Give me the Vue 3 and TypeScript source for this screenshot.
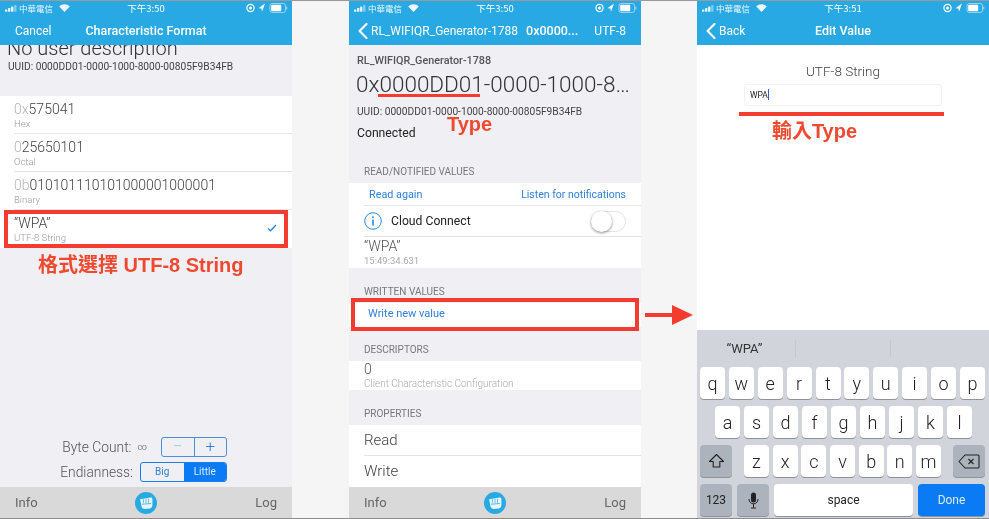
<script setup lang="ts">
const formats = [
  { prefix: '0x', value: '575041', label: 'Hex' },
  { prefix: '0', value: '25650101', label: 'Octal' },
  { prefix: '0b', value: '010101110101000001000001', label: 'Binary' },
  { prefix: '', value: '“WPA”', label: 'UTF-8 String', checked: true },
];

const keyRows = ['qwertyuiop', 'asdfghjkl', 'zxcvbnm'].map((r) => r.split(''));
</script>

<template>
  <svg class="defs" width="0" height="0">
    <symbol id="signal" viewBox="0 0 17 10">
      <rect x="0" y="7" width="3" height="3" rx=".6" />
      <rect x="4" y="5" width="3" height="5" rx=".6" />
      <rect x="8" y="3" width="3" height="7" rx=".6" />
      <rect x="12" y="1" width="3" height="9" rx=".6" opacity=".45" />
    </symbol>
    <symbol id="wifi" viewBox="0 0 14 10">
      <path d="M7 10 .3 3.2C4-.6 10-.6 13.7 3.2Z" />
    </symbol>
    <symbol id="status-right" viewBox="0 0 42 12">
      <circle cx="4.500" cy="6" r="3.600" fill="none" stroke="#fff" stroke-width="1.200" />
      <circle cx="4.500" cy="6" r="1.500" fill="#fff" />
      <path d="M19 1.500 12.500 6.200l3 .4.5 3.200Z" fill="#fff" />
      <rect x="24" y="1.500" width="15.500" height="9" rx="2.200" fill="none" stroke="#fff" stroke-opacity=".5" />
      <rect x="25.200" y="2.700" width="10" height="6.600" rx="1" fill="#fff" />
      <rect x="40.200" y="4.500" width="1.200" height="3" rx=".6" fill="#fff" opacity=".5" />
    </symbol>
    <symbol id="back" viewBox="0 0 10 16">
      <path d="M8.500 1 1.600 8l6.900 7" fill="none" stroke="#fff" stroke-width="2.100" stroke-linecap="round" stroke-linejoin="round" />
    </symbol>
    <symbol id="fist" viewBox="0 0 22 22">
      <circle cx="11" cy="11" r="11" fill="#29a9e3" />
      <path d="M5 7.200 15.500 5.600c1.200-.2 1.900.4 1.900 1.500v6c0 1.800-1 3-2.500 3.300l-5.200.6c-1.400 0-2.500-.7-3-2Z" fill="#e6f5fc" />
      <path d="M8.500 7.200v3.600M11 6.800v4M13.500 6.500v4.300" stroke="#29a9e3" stroke-width=".7" fill="none" />
      <path d="M7 12.200l9-.7" stroke="#29a9e3" stroke-width=".8" fill="none" />
    </symbol>
  </svg>

  <main class="page">
    <!-- format picker -->
    <section class="phone">
      <header class="top">
        <div class="status">
          <div class="status-left">
            <svg class="sig"><use href="#signal" /></svg><span>中華電信</span><svg class="wifi"><use href="#wifi" /></svg>
          </div>
          <span class="status-time">下午3:50</span>
          <svg class="status-right"><use href="#status-right" /></svg>
        </div>
        <div class="nav">
          <span class="nav-cancel">Cancel</span>
          <span class="nav-title">Characteristic Format</span>
        </div>
      </header>

      <div class="body">
        <div class="clipped-title">No user description</div>
        <div class="uuid uuid-left">UUID: 0000DD01-0000-1000-8000-00805F9B34FB</div>
        <ul class="formats">
          <li v-for="f in formats" :key="f.label" class="format">
            <div class="format-inner">
              <div class="format-value"><span class="dim">{{ f.prefix }}</span>{{ f.value }}</div>
              <div class="format-label">{{ f.label }}</div>
              <svg v-if="f.checked" class="check" viewBox="0 0 12 10">
                <path d="M1 5.500 4.200 8.500 11 1.200" fill="none" stroke="#2f7fdc" stroke-width="1.600" />
              </svg>
            </div>
          </li>
        </ul>
        <div class="note note-left">格式選擇 UTF-8 String</div>

        <div class="controls">
          <div class="control-row">
            <span class="control-label">Byte Count:</span>
            <span class="infinity">∞</span>
            <div class="stepper">
              <span class="step step-off">−</span>
              <span class="step">+</span>
            </div>
          </div>
          <div class="control-row">
            <span class="control-label">Endianness:</span>
            <div class="segment">
              <span class="seg">Big</span>
              <span class="seg seg-on">Little</span>
            </div>
          </div>
        </div>
      </div>

      <footer class="tabs">
        <span>Info</span>
        <svg class="fist"><use href="#fist" /></svg>
        <span>Log</span>
      </footer>

      <div class="frame frame-left"></div>
    </section>

    <div class="gap"></div>

    <!-- characteristic detail -->
    <section class="phone">
      <header class="top">
        <div class="status">
          <div class="status-left">
            <svg class="sig"><use href="#signal" /></svg><span>中華電信</span><svg class="wifi"><use href="#wifi" /></svg>
          </div>
          <span class="status-time">下午3:50</span>
          <svg class="status-right"><use href="#status-right" /></svg>
        </div>
        <div class="nav">
          <svg class="back"><use href="#back" /></svg>
          <span class="nav-back-text">RL_WIFIQR_Generator-1788</span>
          <span class="nav-mid">0x0000...</span>
          <span class="nav-utf">UTF-8</span>
        </div>
      </header>

      <div class="body">
        <div class="peripheral">RL_WIFIQR_Generator-1788</div>
        <div class="big-uuid">0x0000DD01-0000-1000-8…</div>
        <div class="uuid uuid-mid">UUID: 0000DD01-0000-1000-8000-00805F9B34FB</div>
        <div class="connected">Connected</div>

        <div class="section-head head-read">READ/NOTIFIED VALUES</div>
        <div class="group">
          <div class="actions">
            <span>Read again</span>
            <span>Listen for notifications</span>
          </div>
          <div class="cloud">
            <svg class="info" viewBox="0 0 18 18">
              <circle cx="9" cy="9" r="8.300" fill="none" stroke="#2f88e6" />
              <circle cx="9" cy="5.200" r="1" fill="#2f88e6" />
              <rect x="8.200" y="7.500" width="1.600" height="6" fill="#2f88e6" />
            </svg>
            <span class="cloud-label">Cloud Connect</span>
            <span class="toggle"><i></i></span>
          </div>
          <div class="read-value">
            <div class="read-text">“WPA”</div>
            <div class="read-time">15:49:34.631</div>
          </div>
        </div>

        <div class="section-head head-written">WRITTEN VALUES</div>
        <div class="group write-row">Write new value</div>

        <div class="section-head head-desc">DESCRIPTORS</div>
        <div class="group desc">
          <div class="desc-value">0</div>
          <div class="desc-label">Client Characteristic Configuration</div>
        </div>

        <div class="section-head head-props">PROPERTIES</div>
        <div class="group">
          <div class="prop prop-first">Read</div>
          <div class="prop">Write</div>
        </div>
      </div>

      <footer class="tabs">
        <span>Info</span>
        <svg class="fist"><use href="#fist" /></svg>
        <span>Log</span>
      </footer>

      <div class="underline"></div>
      <div class="note note-type">Type</div>
      <div class="frame frame-mid"></div>
    </section>

    <div class="gap gap-arrow">
      <svg class="arrow" viewBox="0 0 48 20">
        <rect x="0" y="8" width="28" height="4" fill="#f33c2f" />
        <path d="M27 0 48 10 27 20Z" fill="#f33c2f" />
      </svg>
    </div>

    <!-- edit value -->
    <section class="phone phone-edit">
      <header class="top">
        <div class="status">
          <div class="status-left">
            <svg class="sig"><use href="#signal" /></svg><span>中華電信</span><svg class="wifi"><use href="#wifi" /></svg>
          </div>
          <span class="status-time">下午3:51</span>
          <svg class="status-right"><use href="#status-right" /></svg>
        </div>
        <div class="nav">
          <svg class="back"><use href="#back" /></svg>
          <span class="nav-back-text">Back</span>
          <span class="nav-title">Edit Value</span>
        </div>
      </header>

      <div class="edit-body">
        <div class="edit-title">UTF-8 String</div>
        <div class="edit-input">WPA<i class="caret"></i></div>
        <div class="edit-line"></div>
        <div class="note note-input">輸入Type</div>
      </div>

      <div class="keyboard">
        <div class="suggest">
          <span>“WPA”</span>
          <span></span>
          <span></span>
        </div>
        <div class="key-row">
          <span v-for="k in keyRows[0]" :key="k" class="key">{{ k }}</span>
        </div>
        <div class="key-row key-row-mid">
          <span v-for="k in keyRows[1]" :key="k" class="key">{{ k }}</span>
        </div>
        <div class="key-row key-row-3">
          <span class="key key-fn">
            <svg width="17" height="16" viewBox="0 0 17 16">
              <path d="M8.500 1.500 15.500 8.500H11.800V14H5.200V8.500H1.500Z" fill="none" stroke="#222" stroke-width="1.100" stroke-linejoin="round" />
            </svg>
          </span>
          <div class="letters">
            <span v-for="k in keyRows[2]" :key="k" class="key">{{ k }}</span>
          </div>
          <span class="key key-fn">
            <svg width="22" height="15" viewBox="0 0 22 15">
              <path d="M7 1H20a1 1 0 0 1 1 1V13a1 1 0 0 1-1 1H7L1 7.500Z" fill="none" stroke="#222" stroke-width="1.100" stroke-linejoin="round" />
              <path d="M10.500 5l5 5M15.500 5l-5 5" stroke="#222" stroke-width="1.100" />
            </svg>
          </span>
        </div>
        <div class="key-row key-row-4">
          <span class="key key-fn key-small">123</span>
          <span class="key key-fn">
            <svg width="11" height="17" viewBox="0 0 11 17">
              <rect x="3" y="0.500" width="5" height="10" rx="2.500" fill="#222" />
              <path d="M1 7c0 3 2 4.800 4.500 4.800S10 10 10 7M5.500 12v3.500M3 16h5" fill="none" stroke="#222" stroke-width="1" />
            </svg>
          </span>
          <span class="key key-space">space</span>
          <span class="key key-done">Done</span>
        </div>
      </div>
    </section>
  </main>
</template>

<style>
html,
body {
  margin: 0;
  background: #f5f5f5;
}
</style>

<style scoped>
.defs {
  position: absolute;
}

.page {
  display: flex;
  width: 989px;
  height: 519px;
  overflow: hidden;
  background: #f5f5f5;
  border-bottom: 1px solid #8d8d8d;
  border-top: 1px solid #9a9a9a;
  box-sizing: border-box;
  font-family: Roboto, "Noto Sans", "Noto Sans CJK TC", sans-serif;
  color: #222;
  /* the reference is a soft, upscaled screenshot */
  filter: blur(0.35px);
}

.gap {
  width: 57px;
  flex: none;
}

.gap-arrow {
  width: 56px;
  display: flex;
  align-items: center;
  justify-content: center;
  padding-top: 110px;
  box-sizing: border-box;
}

.arrow {
  width: 48px;
  height: 20px;
}

.phone {
  position: relative;
  width: 292px;
  flex: none;
  display: flex;
  flex-direction: column;
  background: #efeff4;
  margin-top: -1px;
  height: 518px;
}

.top {
  background: #29a9e3;
  color: #fff;
  flex: none;
  position: relative;
  z-index: 2;
}

.status {
  position: relative;
  height: 16px;
  display: flex;
  justify-content: space-between;
  align-items: center;
  padding: 0 4px 0 5px;
}

.status-left {
  display: flex;
  align-items: center;
  gap: 1px;
  opacity: 0.92;
  font-family: "Noto Sans CJK TC", sans-serif;
  font-size: 8.500px;
}

.sig {
  width: 13px;
  height: 8px;
  fill: #fff;
}

.wifi {
  width: 11px;
  height: 8px;
  fill: #fff;
  margin-left: 5px;
}

.status-time {
  position: absolute;
  left: 0;
  right: 0;
  text-align: center;
  font-family: "Noto Sans CJK TC", sans-serif;
  font-size: 9.500px;
}

.status-right {
  width: 42px;
  height: 12px;
}

.nav {
  position: relative;
  height: 29px;
  display: flex;
  align-items: center;
  font-size: 12px;
  white-space: nowrap;
}

.nav-cancel {
  margin-left: 15px;
}

.nav-title {
  position: absolute;
  left: 0;
  right: 0;
  text-align: center;
  font-weight: 500;
  font-size: 12.500px;
}

.back {
  width: 10px;
  height: 16px;
  margin-left: 9px;
  margin-right: 3px;
  flex: none;
}

.nav-mid {
  font-weight: 500;
  font-size: 12.500px;
  margin-left: 8px;
}

.nav-utf {
  margin-left: auto;
  margin-right: 15px;
}

.body {
  flex: 1;
  display: flex;
  flex-direction: column;
  min-height: 0;
  overflow: hidden;
}

/* left screen */
.clipped-title {
  font-size: 20px;
  font-weight: 300;
  line-height: 24px;
  margin-top: -9px;
  padding-left: 7px;
  color: #333;
}

.uuid {
  font-size: 10.200px;
  color: #444;
}

.uuid-left {
  margin: 0 0 0 8px;
  line-height: 14px;
}

.formats {
  list-style: none;
  margin: 22px 0 0;
  padding: 0;
  background: #fff;
}

.format {
  padding-left: 14px;
  height: 38px;
  box-sizing: border-box;
}

.format-inner {
  position: relative;
  height: 100%;
  border-bottom: 1px solid #e4e4e6;
  box-sizing: border-box;
  padding-top: 5px;
}

.format:last-child .format-inner {
  border-bottom: 0;
}

.format-value {
  font-size: 14px;
  font-weight: 300;
  line-height: 17px;
  color: #444;
}

.dim {
  color: #b5b5b5;
}

.format-label {
  font-size: 9.500px;
  font-weight: 300;
  line-height: 11px;
  color: #999;
}

.check {
  position: absolute;
  right: 15px;
  top: 14px;
  width: 10px;
  height: 8px;
}

.note {
  color: #ef4a30;
  font-weight: 700;
  font-family: "Liberation Sans", "Noto Sans CJK TC", sans-serif;
}

.note-left {
  font-size: 20px;
  line-height: 24px;
  margin: 5px 0 0 38px;
}

.controls {
  margin-top: auto;
  padding: 0 65px 5px 0;
  display: flex;
  flex-direction: column;
  align-items: flex-end;
  gap: 5px;
}

.control-row {
  display: flex;
  align-items: center;
  font-size: 13.800px;
  font-weight: 300;
  color: #555;
  height: 20px;
}

.infinity {
  font-size: 9px;
  margin: 0 14px 0 6px;
}

.stepper {
  display: flex;
  width: 66px;
  height: 20px;
  box-sizing: border-box;
  border: 1px solid #4a90e2;
  border-radius: 3px;
}

.step {
  flex: 1;
  text-align: center;
  line-height: 16px;
  color: #2f7fdc;
  font-size: 17px;
}

.step-off {
  color: #9cc3ef;
  border-right: 1px solid #4a90e2;
}

.segment {
  display: flex;
  width: 87px;
  height: 20px;
  margin-left: 7px;
  box-sizing: border-box;
  border: 1px solid #1a7ff0;
  border-radius: 3px;
  overflow: hidden;
}

.seg {
  flex: 1;
  text-align: center;
  font-size: 10px;
  font-weight: 400;
  line-height: 18px;
  color: #2f7fdc;
}

.seg-on {
  background: #0a7bf5;
  color: #d8ebff;
}

.tabs {
  height: 31px;
  flex: none;
  padding: 0 15px;
  display: flex;
  align-items: center;
  justify-content: space-between;
  background: #d9d9d9;
  font-size: 13px;
  color: #666;
}

.fist {
  width: 22px;
  height: 22px;
}

.frame {
  position: absolute;
  box-sizing: border-box;
  border: 4px solid #f33c2f;
}

.frame-left {
  left: 4px;
  top: 210px;
  width: 284px;
  height: 38px;
}

.frame-mid {
  left: 2px;
  top: 298px;
  width: 288px;
  height: 33px;
}

/* middle screen */
.peripheral {
  margin: 9px 0 0 8px;
  font-size: 10.800px;
  font-weight: 500;
  line-height: 14px;
  color: #555;
}

.big-uuid {
  margin: 2px 0 0 7px;
  font-size: 22.500px;
  font-weight: 300;
  line-height: 28px;
  color: #333;
  white-space: nowrap;
}

.uuid-mid {
  margin: 7px 0 0 8px;
  line-height: 14px;
}

.connected {
  margin: 6px 0 0 8px;
  font-size: 12.200px;
  line-height: 16px;
  color: #222;
}

.section-head {
  margin-left: 15px;
  font-size: 10px;
  line-height: 12px;
  color: #77777c;
}

.head-read {
  margin-top: 25px;
}

.head-written {
  margin-top: 18px;
}

.head-desc {
  margin-top: 17px;
}

.head-props {
  margin-top: 18px;
}

.group {
  margin-top: 5px;
  background: #fff;
}

.actions {
  height: 23px;
  margin-left: 15px;
  padding: 0 15px 0 5px;
  display: flex;
  align-items: center;
  justify-content: space-between;
  border-bottom: 1px solid #e4e4e6;
  font-size: 10.800px;
  color: #2f7fdc;
  box-sizing: border-box;
}

.actions span:last-child {
  font-size: 10.500px;
}

.cloud {
  height: 31px;
  margin-left: 15px;
  display: flex;
  align-items: center;
  border-bottom: 1px solid #e4e4e6;
  box-sizing: border-box;
}

.info {
  width: 18px;
  height: 18px;
  flex: none;
}

.cloud-label {
  margin-left: 9px;
  font-size: 12.200px;
}

.toggle {
  margin-left: auto;
  margin-right: 15px;
  width: 35px;
  height: 21px;
  box-sizing: border-box;
  border: 1px solid #e2e2e2;
  border-radius: 11px;
  position: relative;
}

.toggle i {
  position: absolute;
  left: -1px;
  top: -1px;
  width: 21px;
  height: 21px;
  border-radius: 50%;
  background: #fff;
  box-shadow: 0 1px 3px rgba(0, 0, 0, 0.45);
}

.read-value {
  height: 31px;
  padding-left: 15px;
}

.read-text {
  font-size: 14px;
  font-weight: 300;
  line-height: 18px;
  color: #555;
}

.read-time {
  font-size: 9.500px;
  line-height: 11px;
  color: #aaa;
}

.write-row {
  height: 27px;
  padding-left: 19px;
  font-size: 11px;
  line-height: 22px;
  color: #2f7fdc;
}

.desc {
  height: 30px;
  padding-left: 15px;
}

.desc-value {
  font-size: 14px;
  font-weight: 300;
  line-height: 17px;
  color: #555;
}

.desc-label {
  font-size: 10px;
  font-weight: 300;
  line-height: 12px;
  color: #aaa;
}

.prop {
  height: 31px;
  margin-left: 15px;
  font-size: 15px;
  font-weight: 300;
  line-height: 30px;
  color: #444;
}

.prop-first {
  border-bottom: 1px solid #e4e4e6;
  box-sizing: border-box;
}

.underline {
  position: absolute;
  left: 29px;
  top: 94px;
  width: 102px;
  height: 3px;
  background: #f33c2f;
}

.note-type {
  position: absolute;
  left: 98px;
  top: 112px;
  font-size: 20px;
  line-height: 24px;
}

/* right screen */
.phone-edit {
  background: #fff;
}

.edit-body {
  flex: 1;
  display: flex;
  flex-direction: column;
  align-items: center;
}

.edit-title {
  margin-top: 17px;
  font-size: 13.500px;
  font-weight: 300;
  line-height: 18px;
  color: #444;
}

.edit-input {
  width: 198px;
  height: 22px;
  margin-top: 4px;
  padding-left: 5px;
  box-sizing: border-box;
  border: 1px solid #f1f1f1;
  border-radius: 3px;
  font-size: 8.500px;
  line-height: 20px;
  color: #222;
}

.caret {
  display: inline-block;
  width: 1px;
  height: 11px;
  background: #3b5bc4;
  vertical-align: -2px;
}

.edit-line {
  width: 205px;
  height: 4px;
  margin: 6px 0 0 -3px;
  background: #f33c2f;
}

.note-input {
  font-size: 20px;
  line-height: 24px;
  margin: 3px 0 0 -57px;
}

.keyboard {
  height: 188px;
  flex: none;
  background: #d1d5db;
  padding: 0 4px 2px 3px;
  box-sizing: border-box;
}

.suggest {
  height: 37px;
  display: grid;
  grid-template-columns: 1fr 1fr 1fr;
  align-items: center;
  font-size: 13px;
  color: #333;
  padding-bottom: 1px;
  box-sizing: border-box;
}

.suggest span {
  text-align: center;
  height: 17px;
  line-height: 17px;
  border-left: 1px solid #c4c8ce;
}

.suggest span:first-child {
  border-left: 0;
  padding-right: 6px;
}

.key-row {
  display: flex;
  justify-content: space-between;
  height: 32px;
  margin-bottom: 7px;
}

.key-row-mid {
  padding: 0 13px 0 15px;
}

.key-row-3 {
  gap: 12px;
}

.letters {
  flex: 1;
  display: flex;
  justify-content: space-between;
}

.key-row-4 {
  margin-bottom: 0;
  gap: 5px;
}

.key {
  width: 25px;
  height: 32px;
  background: #fff;
  border-radius: 4px;
  box-shadow: 0 1px 0 #8f9298;
  display: flex;
  align-items: center;
  justify-content: center;
  font-size: 18px;
  font-weight: 300;
  color: #222;
}

.key-fn {
  width: 32px;
  flex: none;
  background: #adb3bc;
}

.key-small {
  font-size: 12px;
  font-weight: 400;
}

.key-space {
  flex: 1;
  font-size: 12px;
  font-weight: 400;
}

.key-done {
  width: 67px;
  flex: none;
  background: #0a7bf5;
  color: #d8ebff;
  font-size: 12px;
  font-weight: 400;
}
</style>
